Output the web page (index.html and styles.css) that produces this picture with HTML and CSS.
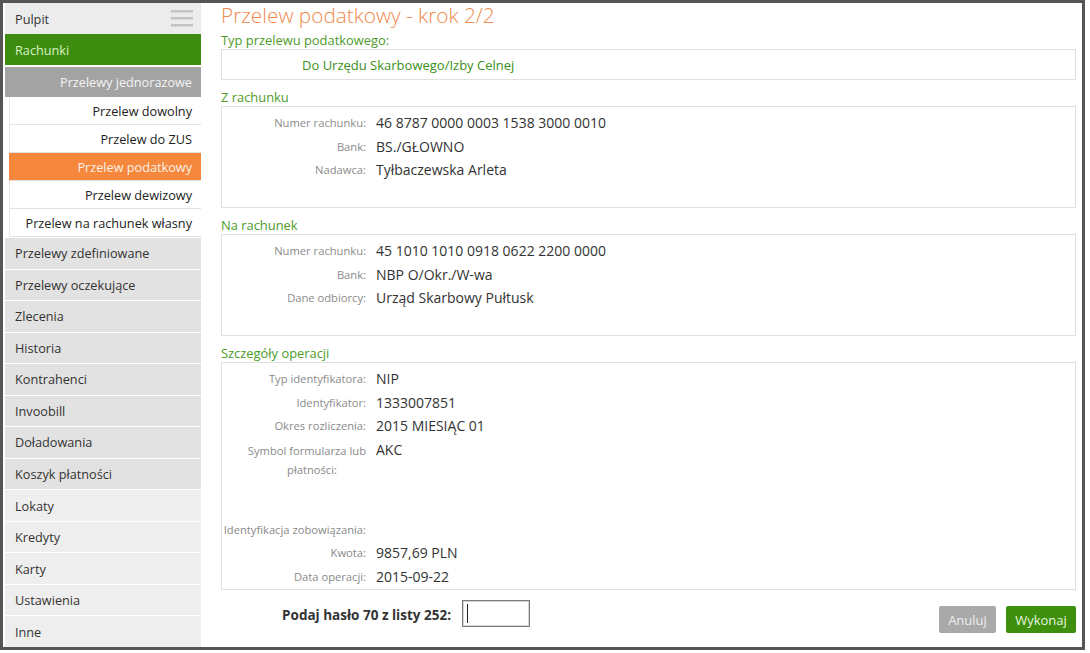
FILE: index.html
```html
<!DOCTYPE html>
<html lang="pl">
<head>
<meta charset="utf-8">
<title>Przelew podatkowy - krok 2/2</title>
<link rel="stylesheet" href="styles.css">
</head>
<body>
<div class="frame">
  <nav class="sidebar">
    <div class="nav-top">
      <span>Pulpit</span>
      <svg class="burger" width="22" height="18" viewBox="0 0 22 18"><rect x="0" y="1" width="22" height="2.5" fill="#c4c4c4"/><rect x="0" y="8" width="22" height="2.5" fill="#c4c4c4"/><rect x="0" y="15" width="22" height="2.5" fill="#c4c4c4"/></svg>
    </div>
    <div class="nav-active">Rachunki</div>
    <div class="nav-group">Przelewy jednorazowe</div>
    <div class="nav-sub">Przelew dowolny</div>
    <div class="nav-sub">Przelew do ZUS</div>
    <div class="nav-sub nav-sub-current">Przelew podatkowy</div>
    <div class="nav-sub">Przelew dewizowy</div>
    <div class="nav-sub">Przelew na rachunek własny</div>
    <div class="nav-item">Przelewy zdefiniowane</div>
    <div class="nav-item">Przelewy oczekujące</div>
    <div class="nav-item">Zlecenia</div>
    <div class="nav-item">Historia</div>
    <div class="nav-item">Kontrahenci</div>
    <div class="nav-item">Invoobill</div>
    <div class="nav-item">Doładowania</div>
    <div class="nav-item">Koszyk płatności</div>
    <div class="nav-item nav-item-light">Lokaty</div>
    <div class="nav-item nav-item-light">Kredyty</div>
    <div class="nav-item nav-item-light">Karty</div>
    <div class="nav-item nav-item-light">Ustawienia</div>
    <div class="nav-item nav-item-light">Inne</div>
  </nav>
  <main class="main">
    <h1 class="title">Przelew podatkowy - krok 2/2</h1>
    <div class="sec-label sec-label-first">Typ przelewu podatkowego:</div>
    <div class="box box-type">Do Urzędu Skarbowego/Izby Celnej</div>

    <div class="sec-label">Z rachunku</div>
    <div class="box box-rows">
      <div class="row"><div class="lbl">Numer rachunku:</div><div class="val">46 8787 0000 0003 1538 3000 0010</div></div>
      <div class="row"><div class="lbl">Bank:</div><div class="val">BS./GŁOWNO</div></div>
      <div class="row"><div class="lbl">Nadawca:</div><div class="val">Tyłbaczewska Arleta</div></div>
    </div>

    <div class="sec-label">Na rachunek</div>
    <div class="box box-rows">
      <div class="row"><div class="lbl">Numer rachunku:</div><div class="val">45 1010 1010 0918 0622 2200 0000</div></div>
      <div class="row"><div class="lbl">Bank:</div><div class="val">NBP O/Okr./W-wa</div></div>
      <div class="row"><div class="lbl">Dane odbiorcy:</div><div class="val">Urząd Skarbowy Pułtusk</div></div>
    </div>

    <div class="sec-label">Szczegóły operacji</div>
    <div class="box box-details">
      <div class="row"><div class="lbl">Typ identyfikatora:</div><div class="val">NIP</div></div>
      <div class="row"><div class="lbl">Identyfikator:</div><div class="val">1333007851</div></div>
      <div class="row"><div class="lbl">Okres rozliczenia:</div><div class="val">2015 MIESIĄC 01</div></div>
      <div class="row row-tall"><div class="lbl lbl-wrap">Symbol formularza lub<br><span class="lbl-second">płatności:</span></div><div class="val">AKC</div></div>
      <div class="row"><div class="lbl">Identyfikacja zobowiązania:</div><div class="val"></div></div>
      <div class="row"><div class="lbl">Kwota:</div><div class="val">9857,69 PLN</div></div>
      <div class="row"><div class="lbl">Data operacji:</div><div class="val">2015-09-22</div></div>
    </div>

    <div class="actions">
      <div class="pass-label">Podaj hasło 70 z listy 252:</div>
      <div class="pass-box"><span class="caret"></span></div>
      <div class="buttons">
        <button class="btn btn-cancel">Anuluj</button>
        <button class="btn btn-ok">Wykonaj</button>
      </div>
    </div>
  </main>
</div>
</body>
</html>
```

FILE: styles.css
```css
* { box-sizing: border-box; }
html, body { margin: 0; padding: 0; background: #fff; }
body { font-family: "Open Sans", "Noto Sans", sans-serif; color: #333; }

.frame {
  width: 1085px;
  height: 650px;
  border: 3px solid #555;
  display: flex;
  background: #fff;
}

/* ---------- sidebar ---------- */
.sidebar {
  width: 198px;
  padding-left: 2px;
  display: flex;
  flex-direction: column;
  font-size: 12.7px;
  flex-shrink: 0;
}
.nav-top {
  height: 31px;
  background: #ececec;
  display: flex;
  align-items: center;
  justify-content: space-between;
  padding: 0 8px 0 10px;
  color: #333;
}
.burger { display: block; margin-top: -2px; }
.nav-active {
  height: 31px;
  background: #3d8c0f;
  color: #d9f2c4;
  display: flex;
  align-items: center;
  padding-left: 10px;
}
.nav-group {
  height: 30px;
  margin-top: 2px;
  background: #a3a3a3;
  color: #f4f4f4;
  display: flex;
  align-items: center;
  justify-content: flex-end;
  padding-right: 9px;
}
.nav-sub {
  height: 28px;
  margin-left: 4px;
  border-bottom: 1px solid #e2e2e2;
  border-left: 1px solid #e8e8e8;
  display: flex;
  align-items: center;
  justify-content: flex-end;
  padding-right: 9px;
  color: #222;
}
.nav-sub-current {
  background: #f5883d;
  color: #fdf0e6;
  border-left-color: #f5883d;
}
.nav-item {
  flex: 1;
  margin-top: 1px;
  background: #e2e2e2;
  display: flex;
  align-items: center;
  padding-left: 10px;
  color: #333;
}
.nav-item:first-of-type { margin-top: 0; }
.nav-item-light { background: #eeeeee; }

/* ---------- main ---------- */
.main {
  flex: 1;
  padding: 0 6px 0 20px;
  display: flex;
  flex-direction: column;
}
.title {
  margin: 0;
  height: 26px;
  line-height: 24px;
  font-size: 20.8px;
  font-weight: 300;
  color: #f08a4e;
}
.sec-label {
  padding-top: 8px;
  line-height: 18px;
  font-size: 12.9px;
  color: #4d9a2a;
}
.sec-label-first { padding-top: 2px; }
.box {
  border: 1px solid #e0e0e0;
  background: #fff;
}
.box-type {
  height: 31px;
  padding-left: 80px;
  display: flex;
  align-items: center;
  font-size: 13px;
  color: #3d8f20;
}
.box-rows { height: 102px; padding-top: 4px; }
.box-details { height: 228px; padding-top: 4px; }

.row {
  display: flex;
  align-items: center;
  height: 23.5px;
}
.row-tall { height: 80px; align-items: flex-start; padding-top: 2px; }
.lbl {
  width: 144px;
  text-align: right;
  font-size: 11.2px;
  color: #8a8a8a;
  white-space: nowrap;
  flex-shrink: 0;
}
.lbl-wrap { line-height: 19px; padding-top: 1px; }
.lbl-second { margin-right: 29px; }
.val {
  margin-left: 10px;
  font-size: 14px;
  color: #333;
}
.row-tall .val { line-height: 20px; }

.actions {
  margin-top: 10px;
  display: flex;
  align-items: flex-start;
}
.pass-label {
  width: 230px;
  text-align: right;
  font-weight: 700;
  font-size: 13.5px;
  color: #333;
  line-height: 27px;
  padding-top: 2px;
}
.pass-box {
  margin-left: 11px;
  width: 68px;
  height: 27px;
  border: 1px solid #7a7a7a;
  box-shadow: inset 0 0 0 1px #d6d6d6;
  display: flex;
  align-items: center;
  padding-left: 4px;
}
.caret { width: 1px; height: 19px; background: #222; }
.buttons {
  margin-left: auto;
  margin-top: 6px;
  display: flex;
  gap: 10px;
}
.btn {
  height: 27px;
  border: none;
  border-radius: 2px;
  font-family: "Open Sans", "Noto Sans", sans-serif;
  font-size: 13px;
  padding: 0 4px;
  cursor: pointer;
}
.btn-cancel { width: 57px; background: #a9a9a9; color: #efefef; }
.btn-ok { width: 70px; background: #3d8f0d; color: #e9f7df; }
```
